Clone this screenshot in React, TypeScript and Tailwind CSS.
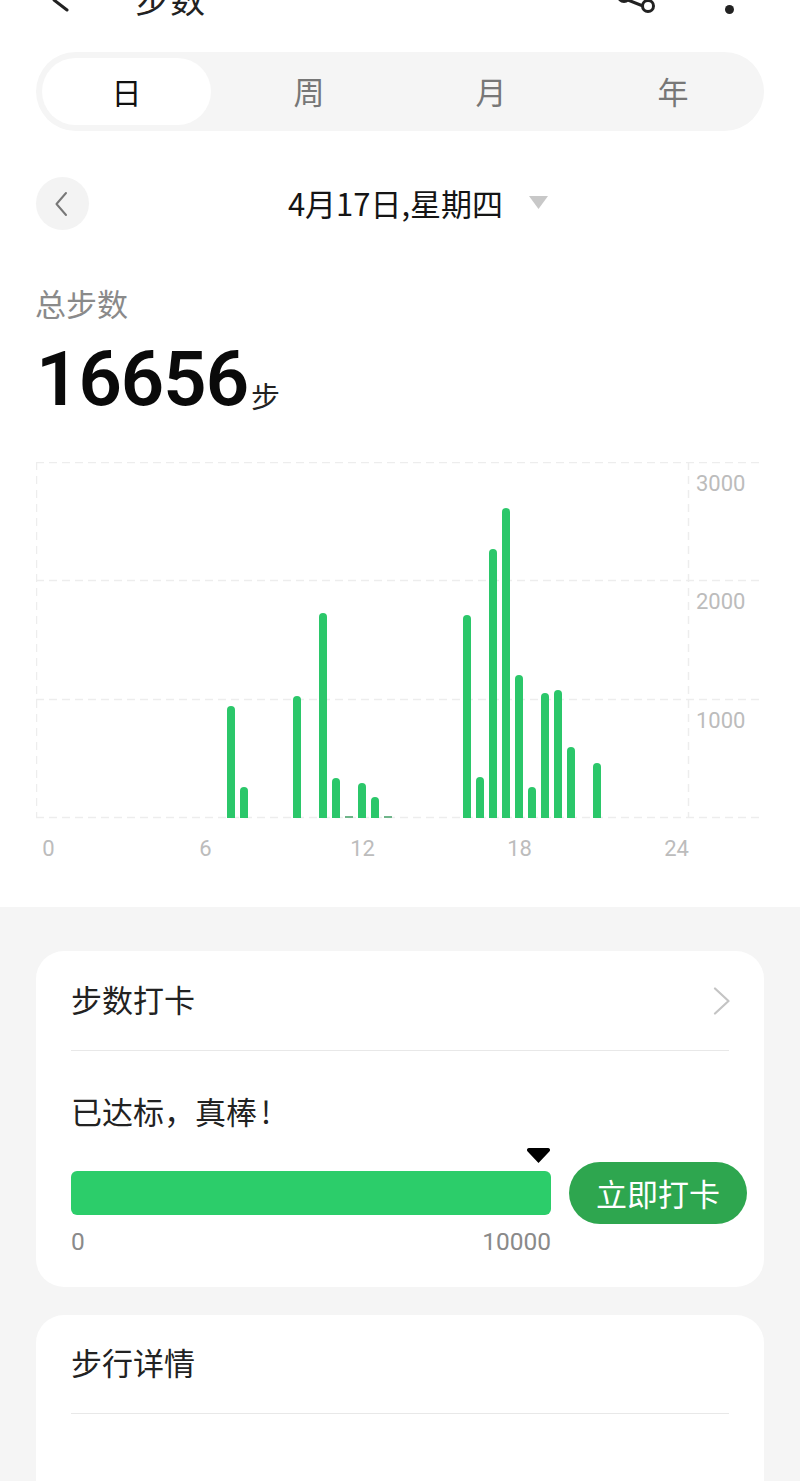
import React from "react";

const cjk = "font-['Noto_Sans_CJK_SC','Noto_Sans',sans-serif]";

const bars: [number, number][] = [
  [231, 706], [244, 787], [297, 696], [323, 613], [336, 778], [349, 816], [362, 783], [375, 797], [388, 816],
  [467, 615], [480, 777], [493, 549], [506, 508], [519, 675], [532, 787], [545, 693], [558, 690], [571, 747], [597, 763],
];

function Chart() {
  const top = 462;
  return (
    <div className="relative mx-[36px] mt-[46px] h-[357px] w-[728px]">
      <svg width="728" height="357" viewBox="36 462 728 357" className="block">
        {[462.5, 580.5, 699.5, 817.5].map((y) => (
          <line key={y} x1="36" x2="764" y1={y} y2={y} stroke="#ededed" strokeWidth="1.5" strokeDasharray="8 5" />
        ))}
        {[36.5, 688.5].map((x) => (
          <line key={x} x1={x} x2={x} y1={top} y2="818" stroke="#ededed" strokeWidth="1.5" strokeDasharray="8 6" />
        ))}
        {bars.map(([x, y]) => (
          <path
            key={x}
            d={y > 810 ? `M${x - 4} 816h8v2h-8z` : `M${x - 4} 818V${y + 4}a4 4 0 0 1 8 0V818z`}
            fill={y > 810 ? "#6fb58a" : "#2bc76a"}
          />
        ))}
      </svg>
      <span className="absolute left-[660px] top-[6px] text-[22px] leading-[32px] text-[#bcbcbc] font-['Roboto',sans-serif]">3000</span>
      <span className="absolute left-[660px] top-[124px] text-[22px] leading-[32px] text-[#bcbcbc] font-['Roboto',sans-serif]">2000</span>
      <span className="absolute left-[660px] top-[243px] text-[22px] leading-[32px] text-[#bcbcbc] font-['Roboto',sans-serif]">1000</span>
    </div>
  );
}

function Card({ title, chevron, children, className, headerClass }: { title: string; chevron?: boolean; children?: React.ReactNode; className?: string; headerClass?: string }) {
  return (
    <section className={`mx-[36px] rounded-[28px] bg-white px-[35px] ${className ?? ""}`}>
      <div className={`flex items-center justify-between border-b border-[#e8e8e8] pb-[4px] ${headerClass ?? ""}`}>
        <h2 className="text-[31px] leading-[44px] text-[#222222]">{title}</h2>
        {chevron && (
          <svg className="mr-[-2px] mt-[4px]" width="18" height="28" viewBox="0 0 18 28" fill="none" stroke="#c4c4c4" strokeWidth="2.2" strokeLinecap="round" strokeLinejoin="round">
            <path d="M2 1.5 15.5 14 2 26.5" />
          </svg>
        )}
      </div>
      {children}
    </section>
  );
}

export default function App() {
  return (
    <div className={`h-[1481px] w-[800px] overflow-hidden bg-white ${cjk}`}>
      <header className="relative h-[52px] overflow-hidden">
        <svg className="absolute left-[50px] top-0" width="24" height="16" viewBox="0 0 24 16" fill="none" stroke="#222" strokeWidth="3" strokeLinecap="round">
          <path d="M4 0 L17 10" />
        </svg>
        <h1 className="absolute left-[135px] top-[-25px] text-[35px] leading-[46px] text-[#222222]">步数</h1>
        <svg className="absolute left-[612px] top-0" width="50" height="18" viewBox="0 0 50 18" fill="none" stroke="#222" strokeWidth="3">
          <circle cx="12" cy="-4" r="5.5" />
          <path d="M16 0 L31 6" />
          <circle cx="36" cy="6" r="5.5" />
        </svg>
        <span className="absolute left-[725px] top-[5px] h-[9px] w-[9px] rounded-full bg-[#222222]" />
      </header>

      <nav className="mx-[36px] grid h-[79px] grid-cols-4 rounded-[40px] bg-[#f5f5f5]">
        {["日", "周", "月", "年"].map((t, i) => (
          <div key={t} className="flex items-center justify-center">
            {i === 0 ? (
              <div className="ml-[-1px] flex h-[67px] w-[169px] items-center justify-center rounded-[34px] bg-white text-[30px] text-[#111111]">
                {t}
              </div>
            ) : (
              <span className="text-[31px] text-[#777777]">{t}</span>
            )}
          </div>
        ))}
      </nav>

      <div className="relative mx-[36px] mt-[46px] flex h-[53px] items-center justify-center">
        <div className="absolute left-0 top-0 flex h-[53px] w-[53px] items-center justify-center rounded-full bg-[#f3f3f3]">
          <svg className="ml-[-4px]" width="14" height="26" viewBox="0 0 14 26" fill="none" stroke="#777" strokeWidth="2" strokeLinecap="round" strokeLinejoin="round">
            <path d="M12 2 2.5 13 12 24" />
          </svg>
        </div>
        <span className="ml-[36px] mt-[-2px] text-[31px] leading-[44px] text-[#151515]">4月17日,星期四</span>
        <svg className="ml-[26px] mt-[-3px]" width="19" height="13" viewBox="0 0 19 13">
          <path d="M0 0h19L9.5 13z" fill="#c8c8c8" />
        </svg>
      </div>

      <div className="ml-[35px] mt-[51px] text-[31px] leading-[44px] text-[#8a8a8a]">总步数</div>
      <div className="mx-[36px] mt-[21px] flex h-[70px] items-end">
        <span className="mb-[2px] font-['Roboto',sans-serif] text-[76px] font-semibold leading-[70px] tracking-[-1px] text-[#0a0a0a]">16656</span>
        <span className="ml-[3px] text-[29px] leading-[42px] text-[#222222]">步</span>
      </div>

      <Chart />

      <div className="ml-[-30px] mt-[15px] flex h-[30px] font-['Roboto',sans-serif] text-[22px] leading-[30px] text-[#bcbcbc]">
        {["0", "6", "12", "18", "24"].map((t) => (
          <span key={t} className="w-[157px] shrink-0 text-center">{t}</span>
        ))}
      </div>

      <main className="mt-[43px] h-[600px] bg-[#f5f5f5] pt-[44px]">
        <Card title="步数打卡" chevron className="h-[336px]" headerClass="h-[100px]">
          <p className="mt-[37px] text-[31px] leading-[46px] text-[#222222]">已达标{"\uFF0C"}真棒<span className="ml-[4px]">!</span></p>
          <div className="relative mt-[28px] flex w-[676px] items-center gap-[18px]">
            <div className="h-[44px] w-[480px] shrink-0 rounded-[6px] bg-[#2ccd6a]" />
            <svg className="absolute left-[456px] top-[-14px]" width="23" height="15" viewBox="0 0 23 15">
              <path d="M2 0h19a2 2 0 0 1 1.6 3.2L11.5 15 .4 3.2A2 2 0 0 1 2 0z" fill="#000" />
            </svg>
            <button className="h-[62px] w-[178px] shrink-0 rounded-[31px] bg-[#2ea64f] text-[31px] text-white">立即打卡</button>
          </div>
          <div className="flex w-[480px] justify-between font-['Roboto',sans-serif] text-[24.5px] leading-[36px] text-[#8a8a8a]">
            <span>0</span>
            <span>10000</span>
          </div>
        </Card>
        <Card title="步行详情" className="mt-[28px] h-[300px]" headerClass="h-[99px]" />
      </main>
    </div>
  );
}
